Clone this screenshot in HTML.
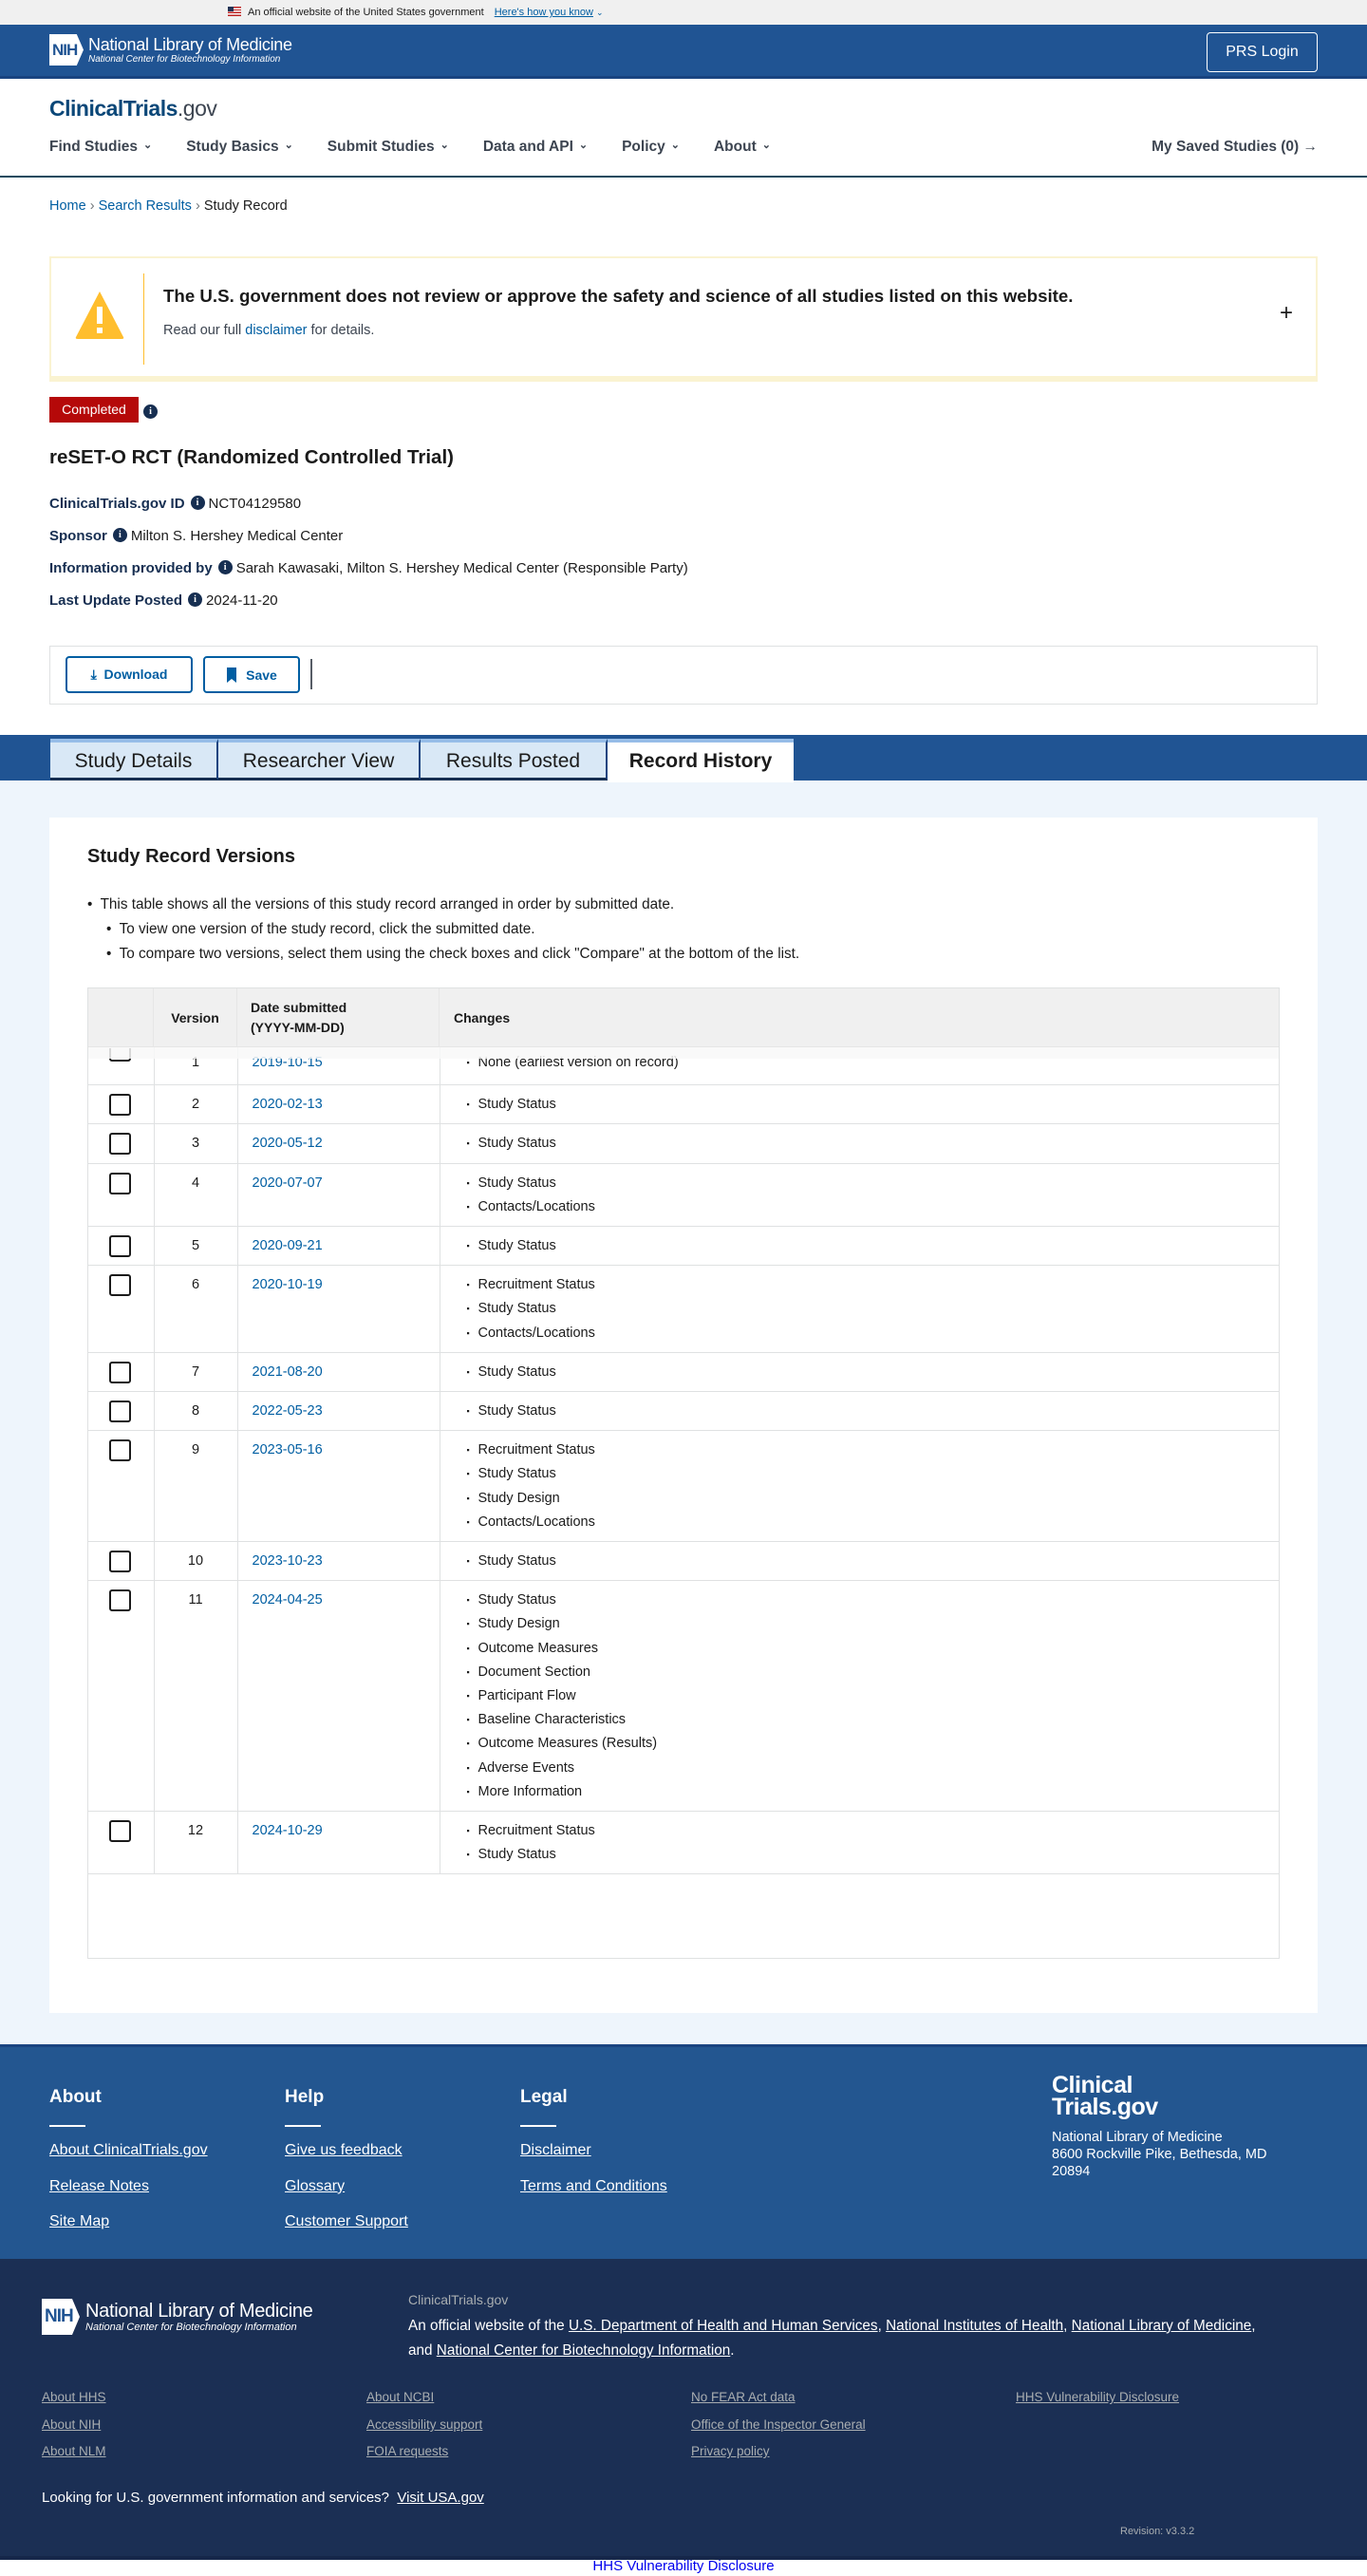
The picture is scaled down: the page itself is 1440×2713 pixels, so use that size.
<!DOCTYPE html>
<html><head><meta charset="utf-8"><style>
*{box-sizing:border-box;margin:0;padding:0}
body{width:1440px;height:2713px;position:relative;font-family:"Liberation Sans",Arial,sans-serif;color:#1b1b1b;background:#fff;overflow:hidden}
.abs{position:absolute}
a{color:#005ea2}
.gov{top:0;left:0;width:1440px;height:26px;background:#f0f0f0;font-size:11px;line-height:26px}
.hdr{top:26px;left:0;width:1440px;height:57px;background:#205493;border-bottom:3px solid #1a4480}
.nih{display:flex;align-items:center;color:#fff}
.nihbox{width:36px;height:33px;background:#fff;color:#205493;font-weight:bold;font-size:17px;line-height:33px;padding-left:3px;letter-spacing:-1px;clip-path:polygon(0 0,80% 0,100% 50%,80% 100%,0 100%)}
.nav{top:146px;left:52px;font-size:15.5px;font-weight:bold;color:#3d4551;display:flex}
.nav span{margin-right:36px}
.nav span:after{content:"⌄";font-size:11px;margin-left:6px;position:relative;top:-3px}
.meta{left:52px;font-size:15px;line-height:20px}
.meta b{color:#162e51;font-weight:bold}
.ii{display:inline-block;width:15px;height:15px;border-radius:50%;background:#162e51;color:#fff;font-size:10px;line-height:15px;text-align:center;font-weight:bold;vertical-align:middle;position:relative;top:-2px;margin:0 4px 0 6px;font-family:"Liberation Serif",serif}
.btn{border:2px solid #005ea2;border-radius:4px;color:#005ea2;font-weight:bold;font-size:14px;display:flex;align-items:center;justify-content:center;height:39px}
.tab{top:778px;height:44px;background:#d9e8f6;border-top:4px solid #97bde8;border-right:2px solid #1a4480;font-size:21px;color:#1b1b1b;line-height:40px;text-align:center;border-bottom:3px solid #162e51}
table{border-collapse:collapse;width:1255px;font-size:14.5px}
td{border-bottom:1px solid #dfe1e2;border-right:1px solid #dfe1e2;vertical-align:top;padding:8px 0 7px 0;line-height:25.2px}
td:last-child{border-right:none}
.cb{width:23px;height:23px;border:2px solid #1b1b1b;border-radius:3px;margin:1px 0 0 22px}
td ul{list-style:none;padding-left:40px}
td li:before{content:"▪";font-size:9px;position:absolute;margin-left:-12px;margin-top:0px}
td li{position:relative}
.fh{font-size:19px;font-weight:bold;color:#fff}
.fl{font-size:16px;color:#fff;text-decoration:underline}
.sl{font-size:13.5px;color:#a9aeb1;text-decoration:underline}
</style></head><body>
<div class="abs gov"><span style="position:absolute;left:240px;color:#1b1b1b"><span style="display:inline-block;width:14px;height:10px;background:repeating-linear-gradient(#b22 0 1.4px,#fff 1.4px 2.8px);position:relative;vertical-align:-1px;margin-right:7px"><span style="position:absolute;left:0;top:0;width:6px;height:5px;background:#235"></span></span>An official website of the United States government <a style="margin-left:8px;color:#005ea2;text-decoration:underline">Here's how you know</a> <span style="color:#005ea2;font-size:9px">⌄</span></span></div>
<div class="abs hdr">
 <div class="abs nih" style="left:52px;top:10px"><div class="nihbox">NIH</div><div style="margin-left:5px"><div style="font-size:18px;line-height:19px;letter-spacing:-.3px">National Library of Medicine</div><div style="font-size:10px;font-style:italic;line-height:11px">National Center for Biotechnology Information</div></div></div>
 <div class="abs" style="left:1271px;top:8px;width:117px;height:42px;border:1px solid #fff;border-radius:4px;color:#fff;font-size:16px;text-align:center;line-height:40px">PRS Login</div>
</div>
<div class="abs" style="top:101px;left:52px;font-size:23px;font-weight:bold;color:#0b4778;letter-spacing:-.5px">ClinicalTrials<span style="font-weight:normal;color:#3d4551">.gov</span></div>
<div class="abs nav"><span>Find Studies</span><span>Study Basics</span><span>Submit Studies</span><span>Data and API</span><span>Policy</span><span>About</span></div>
<div class="abs" style="top:146px;right:52px;font-size:15.5px;font-weight:bold;color:#3d4551">My Saved Studies (0) →</div>
<div class="abs" style="top:185px;left:0;width:1440px;height:2px;background:#1a4a5e"></div>
<div class="abs" style="top:209px;left:52px;font-size:14.5px"><a>Home</a> <span style="color:#71767a">›</span> <a>Search Results</a> <span style="color:#71767a">›</span> Study Record</div>
<div class="abs" style="top:270px;left:52px;width:1336px;height:132px;border:2px solid #faf3d1;border-bottom:6px solid #faf3d1;background:#fff">
 <svg class="abs" style="left:24px;top:33px" width="54" height="54" viewBox="0 0 54 54"><path d="M27 2 L52 50 Q53 52 50 52 L4 52 Q1 52 2 50 Z" fill="#ffbe2e"/><rect x="24" y="18" width="6" height="18" fill="#fff"/><rect x="24" y="40" width="6" height="6" fill="#fff"/></svg>
 <div class="abs" style="left:97px;top:16px;width:1px;height:96px;background:#ffbe2e"></div>
 <div class="abs" style="left:118px;top:29px;font-size:18.7px;font-weight:bold">The U.S. government does not review or approve the safety and science of all studies listed on this website.</div>
 <div class="abs" style="left:118px;top:68px;font-size:14.5px;color:#3d4551">Read our full <a>disclaimer</a> for details.</div>
 <div class="abs" style="right:24px;top:44px;font-size:24px">+</div>
</div>
<div class="abs" style="top:418px;left:52px;height:27px;background:#b50909;color:#fff;font-size:14px;line-height:27px;text-align:center;width:94px">Completed</div>
<span class="abs ii" style="top:425px;left:145px">i</span>
<div class="abs" style="top:470px;left:52px;font-size:20.5px;font-weight:bold;color:#1b1b1b">reSET-O RCT (Randomized Controlled Trial)</div>
<div class="abs meta" style="top:521px"><b>ClinicalTrials.gov ID</b><span class="ii">i</span>NCT04129580</div>
<div class="abs meta" style="top:555px"><b>Sponsor</b><span class="ii">i</span>Milton S. Hershey Medical Center</div>
<div class="abs meta" style="top:589px"><b>Information provided by</b><span class="ii">i</span>Sarah Kawasaki, Milton S. Hershey Medical Center (Responsible Party)</div>
<div class="abs meta" style="top:623px"><b>Last Update Posted</b><span class="ii">i</span>2024-11-20</div>
<div class="abs" style="top:680px;left:52px;width:1336px;height:62px;border:1px solid #dfe1e2"></div>
<div class="abs btn" style="top:691px;left:69px;width:134px">⤓&nbsp; Download</div>
<div class="abs btn" style="top:691px;left:214px;width:102px"><svg width="12" height="16" viewBox="0 0 12 16" style="margin-right:9px"><path d="M1 0h10v16l-5-4-5 4z" fill="#005ea2"/></svg>Save</div>
<div class="abs" style="top:694px;left:327px;width:2px;height:32px;background:#565c65"></div>
<div class="abs" style="top:774px;left:0;width:1440px;height:48px;background:#205493"></div>
<div class="abs" style="top:822px;left:0;width:1440px;height:1331px;background:#eef5fc"></div>
<div class="abs tab" style="left:53px;width:177px">Study Details</div>
<div class="abs tab" style="left:230px;width:213px">Researcher View</div>
<div class="abs tab" style="left:443px;width:197px">Results Posted</div>
<div class="abs tab" style="left:640px;width:196px;background:#fff;border-bottom:none;height:46px;font-weight:bold;border-right:none">Record History</div>
<div class="abs" style="top:861px;left:52px;width:1336px;height:1259px;background:#fff">
 <div class="abs" style="left:40px;top:30px;font-size:20px;font-weight:bold">Study Record Versions</div>
 <div class="abs" style="left:40px;top:79px;font-size:15.3px;line-height:26px">
  <div>•&nbsp; This table shows all the versions of this study record arranged in order by submitted date.</div>
  <div style="padding-left:20px">•&nbsp; To view one version of the study record, click the submitted date.</div>
  <div style="padding-left:20px">•&nbsp; To compare two versions, select them using the check boxes and click "Compare" at the bottom of the list.</div>
 </div>
 <div class="abs" style="left:40px;top:179px;width:1256px;height:1023px;border:1px solid #dfe1e2;overflow:hidden">
  <div style="height:62px;background:#f0f0f0;display:flex;font-size:14px;font-weight:bold;border-bottom:1px solid #e6e6e6;position:relative;z-index:2">
   <div style="width:69px;border-right:1px solid #e6e6e6"></div>
   <div style="width:88px;border-right:1px solid #e6e6e6;text-align:center;line-height:62px">Version</div>
   <div style="width:213px;border-right:1px solid #e6e6e6;padding:10px 0 0 14px;line-height:21px">Date submitted<br>(YYYY-MM-DD)</div>
   <div style="padding-left:15px;line-height:62px">Changes</div>
  </div>
  <div style="height:12px;background:rgba(248,248,248,.85);position:relative;z-index:2"></div>
  <table style="margin-top:-12px;position:relative;z-index:1">
   <colgroup><col style="width:69px"><col style="width:88px"><col style="width:213px"><col></colgroup>
   <tr><td style="padding-top:0"><div class="cb" style="height:14px;border-top:none;border-radius:0 0 3px 3px"></div></td><td align="center" style="padding-top:4px;padding-bottom:10px">1</td><td style="padding-left:15px;padding-top:4px"><a>2019-10-15</a></td><td style="padding-top:4px"><ul><li>None (earliest version on record)</li></ul></td></tr>
   <tr><td><div class="cb"></div></td><td align="center">2</td><td style="padding-left:15px"><a>2020-02-13</a></td><td><ul><li>Study Status</li></ul></td></tr>
   <tr><td><div class="cb"></div></td><td align="center">3</td><td style="padding-left:15px"><a>2020-05-12</a></td><td><ul><li>Study Status</li></ul></td></tr>
   <tr><td><div class="cb"></div></td><td align="center">4</td><td style="padding-left:15px"><a>2020-07-07</a></td><td><ul><li>Study Status</li><li>Contacts/Locations</li></ul></td></tr>
   <tr><td><div class="cb"></div></td><td align="center">5</td><td style="padding-left:15px"><a>2020-09-21</a></td><td><ul><li>Study Status</li></ul></td></tr>
   <tr><td><div class="cb"></div></td><td align="center">6</td><td style="padding-left:15px"><a>2020-10-19</a></td><td><ul><li>Recruitment Status</li><li>Study Status</li><li>Contacts/Locations</li></ul></td></tr>
   <tr><td><div class="cb"></div></td><td align="center">7</td><td style="padding-left:15px"><a>2021-08-20</a></td><td><ul><li>Study Status</li></ul></td></tr>
   <tr><td><div class="cb"></div></td><td align="center">8</td><td style="padding-left:15px"><a>2022-05-23</a></td><td><ul><li>Study Status</li></ul></td></tr>
   <tr><td><div class="cb"></div></td><td align="center">9</td><td style="padding-left:15px"><a>2023-05-16</a></td><td><ul><li>Recruitment Status</li><li>Study Status</li><li>Study Design</li><li>Contacts/Locations</li></ul></td></tr>
   <tr><td><div class="cb"></div></td><td align="center">10</td><td style="padding-left:15px"><a>2023-10-23</a></td><td><ul><li>Study Status</li></ul></td></tr>
   <tr><td><div class="cb"></div></td><td align="center">11</td><td style="padding-left:15px"><a>2024-04-25</a></td><td><ul><li>Study Status</li><li>Study Design</li><li>Outcome Measures</li><li>Document Section</li><li>Participant Flow</li><li>Baseline Characteristics</li><li>Outcome Measures (Results)</li><li>Adverse Events</li><li>More Information</li></ul></td></tr>
   <tr><td><div class="cb"></div></td><td align="center">12</td><td style="padding-left:15px"><a>2024-10-29</a></td><td><ul><li>Recruitment Status</li><li>Study Status</li></ul></td></tr>
  </table>
 </div>
</div>
<div class="abs" style="top:2153px;left:0;width:1440px;height:226px;background:#235690;border-top:3px solid #1a4480">
 <div class="abs fh" style="left:52px;top:42px">About</div><div class="abs fh" style="left:300px;top:42px">Help</div><div class="abs fh" style="left:548px;top:42px">Legal</div>
 <div class="abs" style="left:52px;top:82px;width:38px;height:2px;background:#fff"></div><div class="abs" style="left:300px;top:82px;width:38px;height:2px;background:#fff"></div><div class="abs" style="left:548px;top:82px;width:38px;height:2px;background:#fff"></div>
 <div class="abs fl" style="left:52px;top:100px">About ClinicalTrials.gov</div><div class="abs fl" style="left:52px;top:138px">Release Notes</div><div class="abs fl" style="left:52px;top:175px">Site Map</div>
 <div class="abs fl" style="left:300px;top:100px">Give us feedback</div><div class="abs fl" style="left:300px;top:138px">Glossary</div><div class="abs fl" style="left:300px;top:175px">Customer Support</div>
 <div class="abs fl" style="left:548px;top:100px">Disclaimer</div><div class="abs fl" style="left:548px;top:138px">Terms and Conditions</div>
 <div class="abs" style="left:1108px;top:29px;color:#fff;font-size:25px;font-weight:bold;line-height:23px;letter-spacing:-.5px">Clinical<br>Trials.gov</div>
 <div class="abs" style="left:1108px;top:86px;color:#fff;font-size:14.5px;line-height:18px">National Library of Medicine<br>8600 Rockville Pike, Bethesda, MD<br>20894</div>
</div>
<div class="abs" style="top:2379px;left:0;width:1440px;height:313px;background:#1b2f54">
 <div class="abs nih" style="left:44px;top:42px"><div class="nihbox" style="width:40px;height:38px;line-height:38px;font-size:19px">NIH</div><div style="margin-left:6px"><div style="font-size:20px;line-height:22px;letter-spacing:-.3px">National Library of Medicine</div><div style="font-size:11px;font-style:italic">National Center for Biotechnology Information</div></div></div>
 <div class="abs" style="left:430px;top:35px;color:#a9aeb1;font-size:14px">ClinicalTrials.gov</div>
 <div class="abs" style="left:430px;top:58px;color:#fff;font-size:15.3px;line-height:26px;width:915px">An official website of the <u>U.S. Department of Health and Human Services</u>, <u>National Institutes of Health</u>, <u>National Library of Medicine</u>, and <u>National Center for Biotechnology Information</u>.</div>
 <div class="abs sl" style="left:44px;top:138px">About HHS</div><div class="abs sl" style="left:44px;top:167px">About NIH</div><div class="abs sl" style="left:44px;top:195px">About NLM</div>
 <div class="abs sl" style="left:386px;top:138px">About NCBI</div><div class="abs sl" style="left:386px;top:167px">Accessibility support</div><div class="abs sl" style="left:386px;top:195px">FOIA requests</div>
 <div class="abs sl" style="left:728px;top:138px">No FEAR Act data</div><div class="abs sl" style="left:728px;top:167px">Office of the Inspector General</div><div class="abs sl" style="left:728px;top:195px">Privacy policy</div>
 <div class="abs sl" style="left:1070px;top:138px">HHS Vulnerability Disclosure</div>
 <div class="abs" style="left:44px;top:243px;color:#fff;font-size:15px">Looking for U.S. government information and services? &nbsp;<u>Visit USA.gov</u></div>
 <div class="abs" style="left:1180px;top:281px;color:#a9aeb1;font-size:11px">Revision: v3.3.2</div>
</div>
<div class="abs" style="top:2692px;left:0;width:1440px;height:4px;background:#16274a"></div>
<div class="abs" style="top:2694px;left:0;width:1440px;text-align:center;font-size:15px"><a style="color:#0000ee">HHS Vulnerability Disclosure</a></div>
</body></html>
